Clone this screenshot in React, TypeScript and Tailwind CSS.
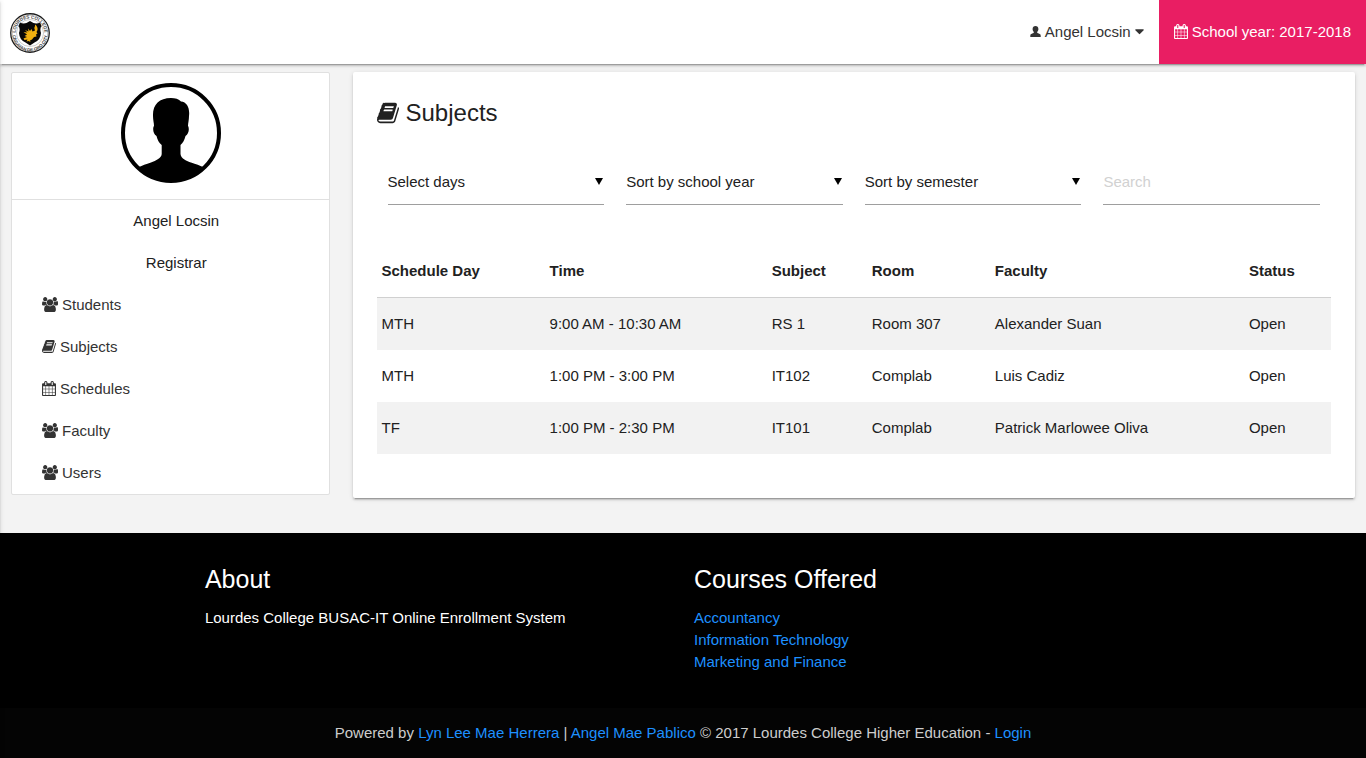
import React from "react";

type IconName = "user" | "calendar" | "book" | "users" | "caret";

const ICONS: Record<IconName, { box: string; d: string }> = {
  user: {
    box: "0 0 11 15",
    d: "M5.5 2C7.3 2 8.4 3.2 8.4 4.9C8.4 6.3 7.8 7.3 7.1 8C7.1 8.8 7.6 9.1 8.8 9.5C10.2 10 10.7 10.5 10.7 11.7V13H.3V11.7C.3 10.5 .8 10 2.2 9.5C3.4 9.1 3.9 8.8 3.9 8C3.2 7.3 2.6 6.3 2.6 4.9C2.6 3.2 3.7 2 5.5 2Z",
  },
  calendar: {
    box: "64 0 1664 1792",
    d: "M192 1664h288v-288h-288v288zm352 0h320v-288h-320v288zm-352-352h288v-320h-288v320zm352 0h320v-320h-320v320zm-352-384h288v-288h-288v288zm736 736h320v-288h-320v288zm-384-736h320v-288h-320v288zm768 736h288v-288h-288v288zm-384-352h320v-320h-320v320zm-352-864v-288q0-13-9.5-22.5t-22.5-9.5h-64q-13 0-22.5 9.5t-9.5 22.5v288q0 13 9.5 22.5t22.5 9.5h64q13 0 22.5-9.5t9.5-22.5zm736 864h288v-320h-288v320zm-384-384h320v-288h-320v288zm384 0h288v-288h-288v288zm32-480v-288q0-13-9.5-22.5t-22.5-9.5h-64q-13 0-22.5 9.5t-9.5 22.5v288q0 13 9.5 22.5t22.5 9.5h64q13 0 22.5-9.5t9.5-22.5zm384-64v1280q0 52-38 90t-90 38h-1408q-52 0-90-38t-38-90v-1280q0-52 38-90t90-38h128v-96q0-66 47-113t113-47h64q66 0 113 47t47 113v96h384v-96q0-66 47-113t113-47h64q66 0 113 47t47 113v96h128q52 0 90 38t38 90z",
  },
  book: {
    box: "64 0 1664 1792",
    d: "M1703 478q40 57 18 129l-275 906q-19 64-76.5 107.5t-122.5 43.5h-923q-77 0-148.5-53.5t-99.5-131.5q-24-67-2-127 0-4 3-27t4-37q1-8-3-21.5t-3-19.5q2-11 8-21t16.5-23.5 16.5-23.5q23-38 45-91.5t30-91.5q3-10 .5-30t-.5-28q3-11 17-28t17-23q21-36 42-92t25-90q1-9-2.5-32t.5-28q4-13 22-30.5t22-22.5q19-26 42.5-84.5t27.5-96.5q1-8-3-25.5t-2-26.5q2-8 9-18t18-23 17-21q8-12 16.5-30.5t15-35 16-36 19.5-32 26.5-23.5 36-11.5 47.5 5.5l-1 3q38-9 51-9h761q74 0 114 56t18 130l-274 906q-36 119-71.5 153.5t-128.5 34.5h-869q-27 0-38 15-11 16-1 43 24 70 144 70h923q29 0 56-15.5t35-41.5l300-987q7-22 5-57 38 15 59 43zm-1064 2q-4 13 2 22.5t20 9.5h608q13 0 25.5-9.5t16.5-22.5l21-64q4-13-2-22.5t-20-9.5h-608q-13 0-25.5 9.5t-16.5 22.5zm-83 256q-4 13 2 22.5t20 9.5h608q13 0 25.5-9.5t16.5-22.5l21-64q4-13-2-22.5t-20-9.5h-608q-13 0-25.5 9.5t-16.5 22.5z",
  },
  users: {
    box: "64 0 1920 1792",
    d: "M657 896q-162 5-265 128h-134q-82 0-138-40.5t-56-118.5q0-353 124-353 6 0 43.5 21t97.5 42.5 119 21.5q67 0 133-23-5 37-5 66 0 159 93 292zm1071 637q0 120-73 189.5t-194 69.5h-874q-121 0-194-69.5t-73-189.5q0-53 3.5-103.5t14-109 26.5-108.5 43-97.5 62-81 85.5-53.5 111.5-20q10 0 43 21.5t73 48 107 48 135 21.5 135-21.5 107-48 73-48 43-21.5q61 0 111.5 20t85.5 53.5 62 81 43 97.5 26.5 108.5 14 109 3.5 103.5zm-1024-1277q0 106-75 181t-181 75-181-75-75-181 75-181 181-75 181 75 75 181zm704 384q0 159-112.5 271.5t-271.5 112.5-271.5-112.5-112.5-271.5 112.5-271.5 271.5-112.5 271.5 112.5 112.5 271.5zm576 225q0 78-56 118.5t-138 40.5h-134q-103-123-265-128 93-133 93-292 0-29-5-66 66 23 133 23 59 0 119-21.5t97.5-42.5 43.5-21q124 0 124 353zm-128-609q0 106-75 181t-181 75-181-75-75-181 75-181 181-75 181 75 75 181z",
  },
  caret: {
    box: "384 0 1024 1792",
    d: "M1408 704q0 26-19 45l-448 448q-19 19-45 19t-45-19l-448-448q-19-19-19-45t19-45 45-19h896q26 0 45 19t19 45z",
  },
};

function Icon({ name, className }: { name: IconName; className: string }) {
  const { box, d } = ICONS[name];
  return (
    <svg viewBox={box} className={`shrink-0 fill-current ${className}`} aria-hidden="true">
      <path d={d} />
    </svg>
  );
}

function Logo() {
  return (
    <svg viewBox="0 0 80 80" className="size-10" role="img" aria-label="Lourdes College">
      <defs>
        <path id="arc-top" d="M11 40a29 29 0 0 1 58 0" />
        <path id="arc-bottom" d="M5 42a35 35 0 0 0 70 0" />
      </defs>
      <circle cx="40" cy="40" r="38.5" fill="#fff" stroke="#1c1c1c" strokeWidth="2.6" />
      <circle cx="40" cy="40" r="35.5" fill="none" stroke="#888" strokeWidth="1" />
      <circle cx="40" cy="40" r="27" fill="#fff" stroke="#9a9a9a" strokeWidth="1" />
      <g fontFamily="Liberation Sans, sans-serif" fontSize="9" fontWeight="700" fill="#444" textAnchor="middle">
        <text>
          <textPath href="#arc-top" startOffset="50%">LOURDES COLLEGE</textPath>
        </text>
        <text>
          <textPath href="#arc-bottom" startOffset="50%">CAGAYAN DE ORO CITY</textPath>
        </text>
      </g>
      <path d="M40 16l7 4q7 2 13-1l3 7q-4 6-1 14-1 14-13 19l-9 6-9-6Q19 54 18 40q3-8-1-14l3-7q6 3 13 1z" fill="#080808" />
      <path
        d="M50 23q6 4 5 11l-2 4 2 3-3 2 1 4-5 1-4 5-4 2 1 3-4-2-4 1 2-4-6 1-2-3 7-3-5-2 5-3-7-5 8 1-5-5 7 3-1-6 4 5 3-4 2 5 5-2q-3-5 0-9z"
        fill="#f0b010"
      />
    </svg>
  );
}

function Avatar() {
  return (
    <svg viewBox="0 0 100 100" className="size-[100px]" role="img" aria-label="Profile picture">
      <circle cx="50" cy="50" r="48" fill="#fff" stroke="#000" strokeWidth="4" />
      <path d="M50 15C54 15 58 16 60 18.5C66 19 69 25 68 33C68 37 67 40 67 43C68.5 45 68 51 64.5 53C63.5 57 62 60 59.5 62V71C60 76 66 78 70 79.5C75 81 79 82.5 82 84A44 44 0 0 1 18 84C21 82.5 25 81 30 79.5C35 77.5 40.5 75 40.7 71V62C38 60 36.5 57 35.5 53C32 51 31.5 45 33 43C33 40 32 37 32 33C31.5 22 38 15 50 15Z" />
    </svg>
  );
}

const MENU: { label: string; icon: IconName; size: string }[] = [
  { label: "Students", icon: "users", size: "mb-0.5 w-4 h-[15px]" },
  { label: "Subjects", icon: "book", size: "mb-0.5 w-[14px] h-[15px]" },
  { label: "Schedules", icon: "calendar", size: "mb-0.5 w-[14px] h-[15px]" },
  { label: "Faculty", icon: "users", size: "mb-0.5 w-4 h-[15px]" },
  { label: "Users", icon: "users", size: "mb-0.5 w-4 h-[15px]" },
];

const FILTERS = ["Select days", "Sort by school year", "Sort by semester"];

const COLUMNS = [
  { label: "Schedule Day", width: "w-[168px]" },
  { label: "Time", width: "w-[222px]" },
  { label: "Subject", width: "w-[100px]" },
  { label: "Room", width: "w-[123px]" },
  { label: "Faculty", width: "w-[254px]" },
  { label: "Status", width: "w-[87px]" },
];

const ROWS = [
  ["MTH", "9:00 AM - 10:30 AM", "RS 1", "Room 307", "Alexander Suan", "Open"],
  ["MTH", "1:00 PM - 3:00 PM", "IT102", "Complab", "Luis Cadiz", "Open"],
  ["TF", "1:00 PM - 2:30 PM", "IT101", "Complab", "Patrick Marlowee Oliva", "Open"],
];

const COURSES = ["Accountancy", "Information Technology", "Marketing and Finance"];

function Header() {
  return (
    <header className="relative flex h-16 items-center justify-between bg-white shadow-[0_2px_2px_0_rgba(0,0,0,0.14),0_1px_5px_0_rgba(0,0,0,0.12),0_3px_1px_-2px_rgba(0,0,0,0.2)]">
      <a href="#home" className="pl-[10px] pt-[2px]">
        <Logo />
      </a>
      <nav className="flex h-full">
        <button type="button" className="flex items-center gap-1 px-[15px] text-[#333]">
          <Icon name="user" className="mb-0.5 h-[15px] w-[11px]" />
          Angel Locsin
          <Icon name="caret" className="mb-0.5 h-[15px] w-[9px]" />
        </button>
        <a href="#school-year" className="flex items-center gap-1 bg-[#e91e63] px-[15px] text-white">
          <Icon name="calendar" className="mb-0.5 h-[15px] w-[14px]" />
          School year: 2017-2018
        </a>
      </nav>
    </header>
  );
}

function Sidebar() {
  return (
    <aside className="w-1/4 pl-[11px] pr-3 pt-2">
      <div className="rounded-[2px] border border-[#e0e0e0] bg-white">
        <div className="flex justify-center border-b border-[#e0e0e0] pb-4 pl-0.5 pt-[10px]">
          <Avatar />
        </div>
        <p className="py-[10px] pl-8 pr-5 text-center">Angel Locsin</p>
        <p className="py-[10px] pl-8 pr-5 text-center">Registrar</p>
        <nav>
          {MENU.map((item) => (
            <a
              key={item.label}
              href={`#${item.label.toLowerCase()}`}
              className="flex items-center gap-1 py-[10px] pl-[30px] pr-5 text-[#333]"
            >
              <Icon name={item.icon} className={item.size} />
              {item.label}
            </a>
          ))}
        </nav>
      </div>
    </aside>
  );
}

function Filters() {
  return (
    <form className="mt-[33px] grid grid-cols-4">
      {FILTERS.map((label) => (
        <div key={label} className="relative px-[11px]">
          <select
            aria-label={label}
            className="h-[45px] w-full appearance-none rounded-none border-b border-[#9e9e9e] bg-transparent outline-none"
          >
            <option>{label}</option>
          </select>
          <svg viewBox="0 0 8 7" className="pointer-events-none absolute right-3 top-[18px] h-[7px] w-2 fill-black" aria-hidden="true">
            <path d="M0 0h8L4 7z" />
          </svg>
        </div>
      ))}
      <div className="px-[11px]">
        <input
          type="text"
          aria-label="Search"
          placeholder="Search"
          className="h-[45px] w-full border-b border-[#9e9e9e] bg-transparent pb-0.5 outline-none placeholder:text-[#d1d1d1]"
        />
      </div>
    </form>
  );
}

function SubjectsCard() {
  return (
    <main className="w-3/4 px-[11px] pt-2">
      <section className="rounded-[2px] bg-white px-6 pb-11 pt-[27px] shadow-[0_2px_2px_0_rgba(0,0,0,0.14),0_1px_5px_0_rgba(0,0,0,0.12),0_3px_1px_-2px_rgba(0,0,0,0.2)]">
        <h1 className="flex items-center gap-[7px] text-2xl leading-7">
          <Icon name="book" className="h-6 w-[22px]" />
          Subjects
        </h1>
        <Filters />
        <table className="mt-10 w-full border-collapse text-left">
          <thead>
            <tr className="border-b border-[#d0d0d0]">
              {COLUMNS.map((column) => (
                <th key={column.label} scope="col" className={`${column.width} px-[5px] py-[15px] font-bold`}>
                  {column.label}
                </th>
              ))}
            </tr>
          </thead>
          <tbody>
            {ROWS.map((row, index) => (
              <tr key={index} className="odd:bg-[#f2f2f2]">
                {row.map((cell, column) => (
                  <td key={column} className="px-[5px] py-[15px]">
                    {cell}
                  </td>
                ))}
              </tr>
            ))}
          </tbody>
        </table>
      </section>
    </main>
  );
}

function Footer() {
  return (
    <footer className="bg-black text-white">
      <div className="mx-auto grid w-[70%] grid-cols-2 gap-x-[22px] pb-[35px] pt-8">
        <section>
          <h2 className="text-[25px] leading-7">About</h2>
          <p className="mt-[14px]">Lourdes College BUSAC-IT Online Enrollment System</p>
        </section>
        <section>
          <h2 className="text-[25px] leading-7">Courses Offered</h2>
          <ul className="mt-[14px]">
            {COURSES.map((course) => (
              <li key={course}>
                <a href="#course" className="text-[#1e90ff]">{course}</a>
              </li>
            ))}
          </ul>
        </section>
      </div>
      <p className="bg-[#040404] py-[14px] text-center text-[#cdcdcd]">
        Powered by <a href="#lyn" className="text-[#1e90ff]">Lyn Lee Mae Herrera</a> |{" "}
        <a href="#angel" className="text-[#1e90ff]">Angel Mae Pablico</a> © 2017 Lourdes College Higher Education -{" "}
        <a href="#login" className="text-[#1e90ff]">Login</a>
      </p>
    </footer>
  );
}

export default function App() {
  return (
    <div className="flex min-h-screen flex-col bg-[#f3f3f3] font-['Liberation_Sans',Arial,sans-serif] text-[15px] leading-[22px] text-[#212121]">
      <Header />
      <div className="flex grow items-start pb-[35px]">
        <Sidebar />
        <SubjectsCard />
      </div>
      <Footer />
      <div className="pointer-events-none fixed inset-y-0 right-full w-16 shadow-[0_2px_2px_0_rgba(0,0,0,0.14),0_1px_5px_0_rgba(0,0,0,0.12)]" aria-hidden="true" />
    </div>
  );
}
